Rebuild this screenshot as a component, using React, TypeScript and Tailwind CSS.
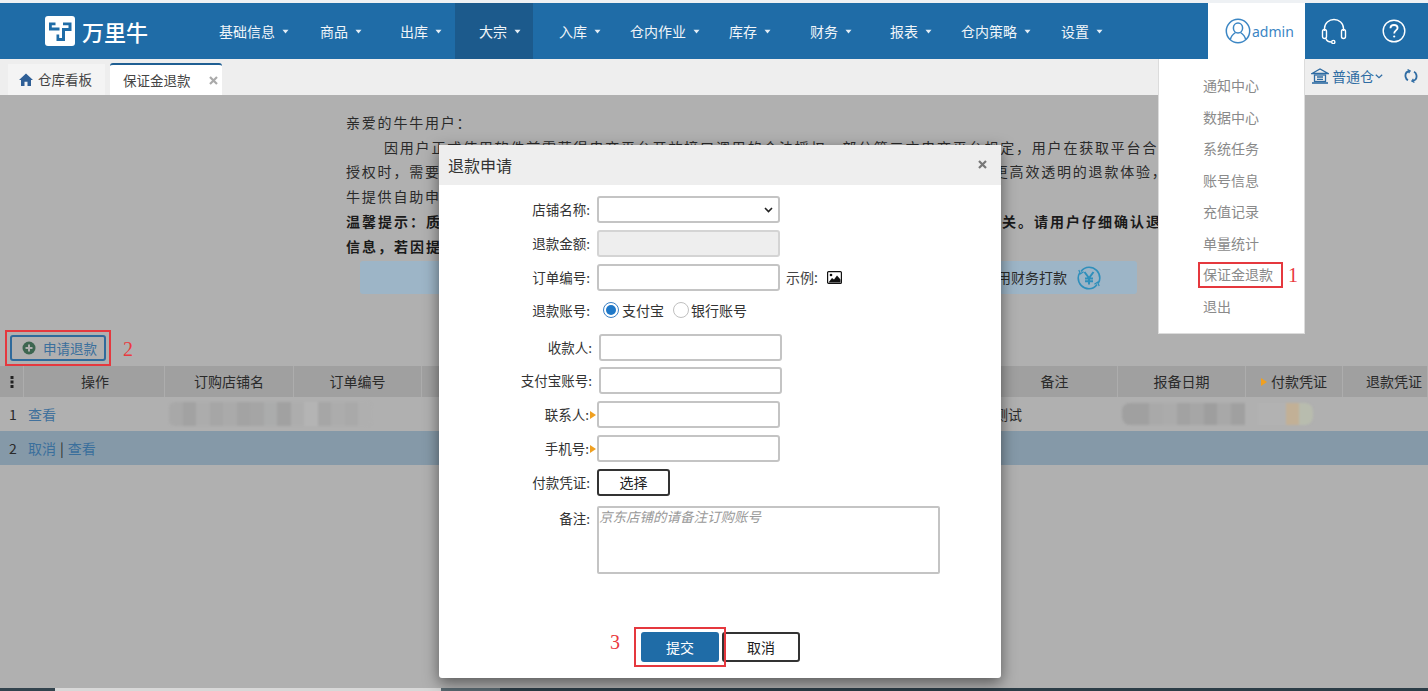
import React from "react";

const Caret = () => (
  <svg width="7" height="5" viewBox="0 0 7 5" className="ml-[7px] mt-[1px]" fill="#e4eef6">
    <path d="M0.5 0.8 L6.5 0.8 L3.5 4.4 Z" />
  </svg>
);

const Logo = () => (
  <svg width="30" height="30" viewBox="0 0 30 30">
    <rect width="30" height="30" rx="3" fill="#fff" />
    <path
      d="M4 6.5 H10.5 V9.2 H6.8 V11.6 H14.5 V14.6 H4 Z M18 6.5 H26.5 V15 H20 V25 H11.5 V18.5 H14.2 V22 H17 V12 H23.5 V9.2 H18 Z"
      fill="#1f6ca7"
    />
  </svg>
);

const UserCircle = () => (
  <svg width="26" height="26" viewBox="0 0 26 26" fill="none" stroke="#3b86c4" strokeWidth="1.5">
    <circle cx="13" cy="13" r="11.7" />
    <ellipse cx="13" cy="10" rx="4.6" ry="5" />
    <path d="M5.4 21.5 C6 17.5 9 15.5 10.5 14.5 M20.6 21.5 C20 17.5 17 15.5 15.5 14.5" />
  </svg>
);

const Headset = () => (
  <svg width="26" height="26" viewBox="0 0 26 26" fill="none" stroke="#fff" strokeWidth="1.4">
    <path d="M3.5 13 V10.5 C3.5 5 8 1.5 13 1.5 C18 1.5 22.5 5 22.5 10.5 V13" />
    <rect x="1.5" y="11.5" width="4" height="9" rx="2" />
    <rect x="20.5" y="11.5" width="4" height="9" rx="2" />
    <path d="M5 20.5 C5.5 23 7 24 10.5 24" />
    <circle cx="12.3" cy="24" r="1.6" />
  </svg>
);

const Help = () => (
  <svg width="24" height="24" viewBox="0 0 24 24" fill="none" stroke="#fff" strokeWidth="1.4">
    <circle cx="12" cy="12" r="10.8" />
    <path d="M8.4 9.3 C8.5 7 10 6 12 6 C14 6 15.6 7.2 15.6 9 C15.6 11.3 12.2 11.6 12.2 14.4" strokeWidth="1.8" />
    <circle cx="12.2" cy="17.5" r="1.1" fill="#fff" stroke="none" />
  </svg>
);

const Home = () => (
  <svg width="14" height="13" viewBox="0 0 14 13" fill="#2f5f96">
    <path d="M7 0.5 L14 7 H12 V13 H8.5 V8.8 H5.5 V13 H2 V7 H0 Z" />
  </svg>
);

const Bank = () => (
  <svg width="18" height="16" viewBox="0 0 18 16" fill="none" stroke="#2f6ca3" strokeWidth="1.3">
    <path d="M1 5.5 L9 1 L17 5.5 Z" />
    <rect x="3.5" y="7" width="11" height="6.5" />
    <path d="M6 9 H12 M6 11.3 H12" />
    <path d="M1 15 H17" strokeWidth="1.6" />
  </svg>
);

const Refresh = () => (
  <svg width="14" height="14" viewBox="0 0 14 14" fill="none" stroke="#2f6ca3" strokeWidth="1.8">
    <path d="M5.5 2 C2.5 2.7 1 5 1.6 8 C1.9 9.5 2.8 10.7 4 11.3" />
    <path d="M3.6 0.5 L6.2 2 L4.6 4.2" strokeWidth="1.2" />
    <path d="M8.5 12 C11.5 11.3 13 9 12.4 6 C12.1 4.5 11.2 3.3 10 2.7" />
    <path d="M10.4 13.5 L7.8 12 L9.4 9.8" strokeWidth="1.2" />
  </svg>
);

const Yen = () => (
  <svg width="24" height="24" viewBox="0 0 24 24" fill="none" stroke="#2f8fbb" strokeWidth="1.6">
    <path d="M4 5.5 C6 2.7 9 1.2 12 1.2 C18 1.2 22.8 6 22.8 12 C22.8 14 22.3 15.6 21.3 17.2" />
    <path d="M20 18.5 C18 21.3 15 22.8 12 22.8 C6 22.8 1.2 18 1.2 12 C1.2 10 1.7 8.4 2.7 6.8" />
    <path d="M1.8 4 L3.4 7.8 L6.6 5.8 M22.2 20 L20.6 16.2 L17.4 18.2" strokeWidth="1.2" />
    <path d="M7.5 6 L12 12 L16.5 6 M12 12 V18.5 M8 12.5 H16 M8 15.3 H16" strokeWidth="2" />
  </svg>
);

const ImageIcon = () => (
  <svg width="15" height="13" viewBox="0 0 15 13">
    <rect x="0.6" y="0.6" width="13.8" height="11.8" rx="1" fill="#fff" stroke="#111" strokeWidth="1.2" />
    <circle cx="4" cy="4" r="1.3" fill="#111" />
    <path d="M1.5 11.5 L5 7 L7 8.5 L10 4.5 L13.5 8.5 V11.5 Z" fill="#111" />
  </svg>
);

const Marker = () => (
  <svg width="6" height="8" viewBox="0 0 6 8" fill="#f0a020">
    <path d="M0 0 L6 4 L0 8 Z" />
  </svg>
);

const Close = ({ color }: { color: string }) => (
  <svg width="9" height="9" viewBox="0 0 9 9" fill="none" stroke={color} strokeWidth="2.2">
    <path d="M1 1 L8 8 M8 1 L1 8" />
  </svg>
);

const Badge = ({ children, className }: { children: React.ReactNode; className: string }) => (
  <span className={"absolute font-['Liberation_Serif',serif] text-[20px] leading-none text-[#ea3a40] " + className}>
    {children}
  </span>
);

const navItems: { label: string; cls: string }[] = [
  { label: "基础信息", cls: "w-[101px] pl-[15px]" },
  { label: "商品", cls: "w-[80px] pl-[15px]" },
  { label: "出库", cls: "w-[70px] pl-[15px]" },
  { label: "大宗", cls: "w-[78px] pl-[24px] bg-[#1c5a8c]" },
  { label: "入库", cls: "w-[82px] pl-[26px]" },
  { label: "仓内作业", cls: "w-[99px] pl-[15px]" },
  { label: "库存", cls: "w-[81px] pl-[15px]" },
  { label: "财务", cls: "w-[80px] pl-[15px]" },
  { label: "报表", cls: "w-[71px] pl-[15px]" },
  { label: "仓内策略", cls: "w-[100px] pl-[15px]" },
  { label: "设置", cls: "w-[162px] pl-[15px]" },
];

const menuItems = ["通知中心", "数据中心", "系统任务", "账号信息", "充值记录", "单量统计", "保证金退款", "退出"];

const columns: { label: string; cls: string; marker?: boolean }[] = [
  { label: "操作", cls: "w-[141px] justify-center pl-[2px]" },
  { label: "订购店铺名", cls: "w-[129px] justify-center" },
  { label: "订单编号", cls: "w-[128px] justify-center" },
  { label: "", cls: "w-[570px]" },
  { label: "备注", cls: "w-[126px] justify-center" },
  { label: "报备日期", cls: "w-[128px] justify-center" },
  { label: "付款凭证", cls: "w-[97px] justify-center", marker: true },
  { label: "退款凭证", cls: "flex-1 pl-[23px]" },
];

const blurA = ["#a8a8a8", "#a2a2a2", "#acacac", "#a6a6a6", "#aaaaaa", "#a3a3a3", "#a5a5a5", "#abacac", "#a1a1a1", "#adadad", "#b4b4b4", "#a6a6a6", "#acacac", "#a9a9a9", "#afafaf"];
const blurB = ["#a0a0a0", "#a0a0a0", "#a9a9a9", "#ababab", "#a2a2a2", "#a6a6a6", "#9e9e9e", "#a8a8a8", "#a0a0a0", "#b0b0b0", "#b2b2b2", "#b2b2b2", "#c2b096", "#b8bcae"];

const Field = ({
  label,
  mark,
  labelW = "w-[151px]",
  className = "",
  children,
}: {
  label: string;
  mark?: boolean;
  labelW?: string;
  className?: string;
  children?: React.ReactNode;
}) => (
  <div className={"flex items-center " + className}>
    <div className={"flex items-center justify-end text-[13.5px] text-[#333] " + labelW}>
      <span>{label}</span>
      {mark && <span className="-mr-[6px] ml-[1px] flex"><Marker /></span>}
    </div>
    <div className="ml-[7px] h-[27px] w-[183px] rounded-[3px] border-2 border-[#c4c4c4] bg-white" />
    {children}
  </div>
);

export default function App() {
  return (
    <div className="relative flex h-[691px] w-[1428px] flex-col overflow-hidden bg-[#b0b0b0] font-['Noto_Sans_CJK_SC','Noto_Sans',sans-serif] text-[#222]">
      <div className="h-[3px] shrink-0 bg-[#eef1f4]" />

      <header className="flex h-[56px] shrink-0 items-stretch bg-[#1f6ca7] text-[14px] text-[#f0f5f9]">
        <div className="flex w-[204px] items-center pl-[45px]">
          <Logo />
          <span className="ml-[7px] text-[22px] font-medium leading-none text-white">万里牛</span>
        </div>
        {navItems.map((n) => (
          <div key={n.label} className={"flex items-center " + n.cls}>
            <span>{n.label}</span>
            <Caret />
          </div>
        ))}
        <div className="flex w-[97px] items-center bg-white pl-[17px] font-['Noto_Sans',sans-serif] text-[#3b86c4]">
          <UserCircle />
          <span className="ml-[1px]">admin</span>
        </div>
        <div className="flex w-[58px] items-center justify-center"><Headset /></div>
        <div className="flex w-[59px] items-center justify-center pl-[2px]"><Help /></div>
      </header>

      <nav className="flex h-[36px] shrink-0 items-end whitespace-nowrap bg-[#eeeeee] pl-[8px] text-[13.5px] text-[#444]">
        <div className="flex h-[31px] w-[97px] items-center bg-[#f4f4f4] pl-[11px]">
          <Home />
          <span className="ml-[5px]">仓库看板</span>
        </div>
        <div className="ml-[5px] flex h-[32px] w-[112px] items-center rounded-t-[3px] border-t-2 border-[#1f5f93] bg-white pl-[13px]">
          <span>保证金退款</span>
          <span className="ml-[18px] flex"><Close color="#aaaaaa" /></span>
        </div>
        <div className="ml-auto flex h-[36px] items-center pb-[2px] pr-[10px] text-[14px] text-[#2f6ca3]">
          <Bank />
          <span className="ml-[3px]">普通仓</span>
          <svg width="8" height="5" viewBox="0 0 8 5" fill="none" stroke="#2f6ca3" strokeWidth="1.2" className="ml-[1px]">
            <path d="M0.8 0.8 L4 3.8 L7.2 0.8" />
          </svg>
          <span className="ml-[21px] flex"><Refresh /></span>
        </div>
      </nav>

      <main className="flex flex-1 flex-col">
        <div className="ml-[346px] mt-[15px] w-[812px] overflow-hidden whitespace-nowrap text-[14px] leading-[24.7px] tracking-[1.8px] text-[#2a2a2a]">
          <p>亲爱的牛牛用户：</p>
          <p className="pl-[38px]">因用户正式使用软件前需获得电商平台开放接口调用的合法授权，部分第三方电商平台规定，用户在获取平台合法</p>
          <p>授权时，需要用户向平台缴纳相应的保证金。为了给广大牛牛用户提供更便捷及时、更安全、更高效透明的退款体验，</p>
          <p>牛提供自助申请退款功能。</p>
          <p className="font-bold tracking-[2px] text-[#1a1a1a]">温馨提示：质保金退款由电商平台审核，审核结果及退款周期均由平台决定，与万里牛软件无关。请用户仔细确认退款</p>
          <p className="font-bold tracking-[2px] text-[#1a1a1a]">信息，若因提交信息有误导致退款失败，请重新提交。</p>
        </div>

        <div className="ml-[360px] mt-[3px] flex h-[33px] w-[777px] items-center justify-end rounded-[3px] bg-[#9db5c7] pr-[36px] text-[14px] text-[#2a2a2a]">
          <span>用财务打款</span>
          <span className="ml-[10px] flex"><Yen /></span>
        </div>

        <div className="relative ml-[10px] mt-[41px] flex h-[26px] w-[96px] items-center rounded-[3px] border-2 border-[#2f6a9b] pl-[10px] text-[13.5px] text-[#3a6f9c]">
          <svg width="14" height="14" viewBox="0 0 14 14">
            <circle cx="7" cy="7" r="6.5" fill="#3d6650" />
            <path d="M7 3.5 V10.5 M3.5 7 H10.5" stroke="#b0b0b0" strokeWidth="2" />
          </svg>
          <span className="ml-[7px]">申请退款</span>
          <div className="absolute -inset-x-[7px] -inset-y-[7px] border-2 border-[#e5383e]" />
          <Badge className="left-[111px] top-[2px]">2</Badge>
        </div>

        <div className="mt-[5px] flex h-[31px] items-center bg-[#a0a0a0] text-[14px] text-[#2a2a2a]">
          <div className="flex h-full w-[24px] items-center justify-center border-r border-[#adadad]">
            <svg width="4" height="12" viewBox="0 0 4 12" fill="#222">
              <rect x="0.5" y="0" width="3" height="3" />
              <rect x="0.5" y="4.5" width="3" height="3" />
              <rect x="0.5" y="9" width="3" height="3" />
            </svg>
          </div>
          {columns.map((c, i) => (
            <div key={i} className={"flex h-full shrink-0 items-center border-r border-[#adadad] " + c.cls}>
              {c.marker && <span className="mr-[4px] flex"><Marker /></span>}
              <span>{c.label}</span>
            </div>
          ))}
        </div>

        <div className="flex h-[34px] items-center text-[14px] text-[#2a2a2a]">
          <div className="w-[28px] pl-[9px]">1</div>
          <span className="w-[141px] text-[#41719c]">查看</span>
          <div className="flex h-[24px] w-[203px] shrink-0 overflow-hidden rounded-[6px] blur-[1px]">
            {blurA.map((c, i) => (
              <span key={i} className="h-full flex-1" style={{ backgroundColor: c }} />
            ))}
          </div>
          <span className="ml-[622px] w-[106px]">测试</span>
          <div className="ml-[22px] flex h-[22px] w-[191px] shrink-0 overflow-hidden rounded-[8px] blur-[1px]">
            {blurB.map((c, i) => (
              <span key={i} className="h-full flex-1" style={{ backgroundColor: c }} />
            ))}
          </div>
        </div>

        <div className="flex h-[34px] items-center bg-[#8599a8] text-[14px] text-[#2a2a2a]">
          <div className="w-[28px] pl-[9px]">2</div>
          <span className="text-[#3a6f9c]">取消</span>
          <span className="mx-[4px]">|</span>
          <span className="text-[#3a6f9c]">查看</span>
        </div>
      </main>

      {/* bottom strip of the window behind */}
      <div className="flex h-[3px] shrink-0">
        <div className="w-[55px] bg-[#33444e]" />
        <div className="w-[386px] bg-[#d8d8d8]" />
        <div className="w-[59px] bg-[#5a6a72]" />
        <div className="flex-1 bg-[#2c3d47]" />
      </div>

      {/* user dropdown */}
      <div className="absolute left-[1158px] top-[59px] flex h-[275px] w-[147px] flex-col border-x border-b border-[#dcdcdc] bg-white pt-[11px] text-[14px] text-[#8a8a8a]">
        {menuItems.map((m) => (
          <div key={m} className="relative flex h-[31.5px] items-center pl-[44px]">
            <span>{m}</span>
            {m === "保证金退款" && (
              <>
                <div className="absolute left-[39px] top-[3px] h-[26px] w-[85px] border-2 border-[#e5383e]" />
                <Badge className="left-[129px] top-[6px]">1</Badge>
              </>
            )}
          </div>
        ))}
      </div>

      {/* modal */}
      <div className="absolute left-[439px] top-[145px] flex h-[533px] w-[562px] flex-col rounded-[3px] bg-white shadow-[0_5px_15px_rgba(0,0,0,0.5)]">
        <div className="flex h-[40px] shrink-0 items-center justify-between bg-[#eeeeee] pb-[1px] pl-[9px] pr-[14px]">
          <span className="text-[16px] text-[#333]">退款申请</span>
          <Close color="#777777" />
        </div>
        <div className="flex flex-col pt-[11px]">
          <Field label="店铺名称:">
            <svg width="9" height="6" viewBox="0 0 9 6" fill="none" stroke="#222" strokeWidth="1.6" className="-ml-[16px]">
              <path d="M1 1 L4.5 4.5 L8 1" />
            </svg>
          </Field>
          <div className="mt-[7px] flex items-center">
            <div className="w-[151px] text-right text-[13.5px] text-[#333]">退款金额:</div>
            <div className="ml-[7px] h-[27px] w-[183px] rounded-[3px] border-2 border-[#d4d4d4] bg-[#eeeeee]" />
          </div>
          <Field label="订单编号:" className="mt-[7px]">
            <span className="ml-[6px] text-[14px] text-[#444]">示例:</span>
            <span className="ml-[9px] flex"><ImageIcon /></span>
          </Field>
          <div className="mt-[6px] flex h-[26px] items-center text-[14px] text-[#333]">
            <div className="w-[151px] text-right text-[13.5px]">退款账号:</div>
            <span className="ml-[13px] flex h-[16px] w-[16px] items-center justify-center rounded-full border border-[#3b7fc4]">
              <span className="h-[10px] w-[10px] rounded-full bg-[#1f78c8]" />
            </span>
            <span className="ml-[3px]">支付宝</span>
            <span className="ml-[9px] h-[16px] w-[16px] rounded-full border border-[#c0c0c0]" />
            <span className="ml-[2px]">银行账号</span>
          </div>
          <Field label="收款人:" labelW="w-[153px]" className="mt-[11px]" />
          <Field label="支付宝账号:" labelW="w-[153px]" className="mt-[6px]" />
          <Field label="联系人:" mark className="mt-[7px]" />
          <Field label="手机号:" mark className="mt-[7px]" />
          <div className="mt-[7px] flex items-center">
            <div className="w-[151px] text-right text-[13.5px] text-[#333]">付款凭证:</div>
            <div className="ml-[7px] flex h-[27px] w-[73px] items-center justify-center rounded-[3px] border-2 border-[#333] text-[14px] text-[#222]">选择</div>
          </div>
          <div className="mt-[10px] flex items-start">
            <div className="w-[151px] pt-[2px] text-right text-[13.5px] text-[#333]">备注:</div>
            <div className="ml-[7px] h-[68px] w-[343px] rounded-[2px] border-2 border-[#c4c4c4] text-[13.5px] italic leading-[17px] text-[#999]">京东店铺的请备注订购账号</div>
          </div>
          <div className="relative mt-[58px] flex items-center pl-[202px]">
            <div className="relative flex h-[30px] w-[78px] items-center justify-center rounded-[3px] bg-[#1f6ca7] text-[14px] text-white">
              提交
              <div className="absolute -inset-x-[7px] -inset-y-[5px] border-2 border-[#e5383e]" />
              <Badge className="-left-[31px] top-[0px]">3</Badge>
            </div>
            <div className="ml-[3px] flex h-[30px] w-[78px] items-center justify-center rounded-[3px] border-2 border-[#333] text-[14px] text-[#222]">取消</div>
          </div>
        </div>
      </div>
    </div>
  );
}
